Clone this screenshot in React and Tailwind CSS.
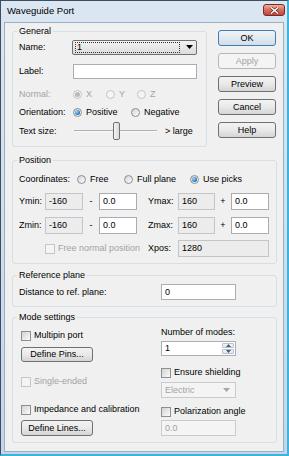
import React from 'react'

const dis = 'text-[#a3a3a3]'

function Radio({ checked, disabled, children, className = '' }) {
  return (
    <div className={`flex items-center ${className}`}>
      <span
        className={`w-[9px] h-[9px] rounded-full border flex items-center justify-center ${
          disabled ? 'border-[#c2c4c6] bg-[#f4f4f4]' : 'border-[#8c8e91] bg-linear-to-br from-[#d4d4d4] to-[#fcfcfc]'
        }`}
      >
        {checked && (
          <span
            className={`w-[5px] h-[5px] rounded-full ${
              disabled ? 'bg-[#b9b9b9]' : 'bg-[radial-gradient(circle_at_35%_35%,#9fdcff,#1767b8_75%)]'
            }`}
          />
        )}
      </span>
      <span className={`ml-[4px] whitespace-nowrap ${disabled ? dis : ''}`}>{children}</span>
    </div>
  )
}

function Check({ disabled, children, className = '' }) {
  return (
    <div className={`flex items-center ${className}`}>
      <span
        className={`shrink-0 w-[10px] h-[10px] border ${
          disabled ? 'border-[#c6c6c6] bg-[#f4f4f4]' : 'border-[#8e8f8f] bg-linear-to-br from-[#d2d2d2] to-[#fbfbfb]'
        }`}
      />
      <span className={`ml-[3px] whitespace-nowrap ${disabled ? dis : ''}`}>{children}</span>
    </div>
  )
}

function Button({ children, disabled, def, className = '' }) {
  return (
    <div
      className={`flex items-center justify-center rounded-[3px] border ${
        disabled
          ? 'border-[#b5b8bb] bg-[#f4f4f4] text-[#a3a3a3]'
          : def
          ? 'border-[#3c7fb1] bg-linear-to-b from-[#eef4fa] to-[#d3dde8]'
          : 'border-[#707070] bg-linear-to-b from-[#f3f3f3] via-[#e9e9e9] to-[#d5d5d5]'
      } ${className}`}
    >
      {children}
    </div>
  )
}

function Field({ value, disabled, grey, className = '' }) {
  return (
    <div
      className={`flex items-center px-[3px] border ${
        disabled
          ? 'border-[#c9cbce] bg-[#f4f4f4] text-[#a3a3a3]'
          : grey
          ? 'border-[#c2c5c9] bg-[#ececec]'
          : 'border-[#abadb3] bg-white'
      } ${className}`}
    >
      {value}
    </div>
  )
}

function Arrow({ color = '#000' }) {
  return (
    <svg width="7" height="4" viewBox="0 0 7 4">
      <path d="M0 0h7L3.5 4z" fill={color} />
    </svg>
  )
}

function Group({ title, className = '', children }) {
  return (
    <fieldset className={`border border-[#d5dfe5] rounded-[3px] ${className}`}>
      <legend className="ml-[4px] px-[2px] leading-[11px]">{title}</legend>
      {children}
    </fieldset>
  )
}

export default function App() {
  return (
    <div className="w-[289px] h-[456px] flex flex-col border-l border-t border-[#3e4e60] border-r-2 border-b-2 border-r-[#3ab6dc] border-b-[#3ab6dc] bg-linear-to-b from-[#dbe6f3] to-[#c5d6ea] font-['Liberation_Sans',Arial,sans-serif] text-[9px] leading-[11px] text-black">
      {/* title bar */}
      <div className="h-[21px] flex items-start justify-between">
        <span className="ml-[6px] mt-[4px] text-[9.5px]">Waveguide Port</span>
        <div className="mt-[3px] mr-[2px] w-[22px] h-[12px] rounded-[3px] border border-[#7a2a22] bg-linear-to-b from-[#eab0a2] via-[#d66a5c] to-[#c0463a] flex items-center justify-center">
          <svg width="9" height="7" viewBox="0 0 9 7">
            <path d="M1 0.5l7 6M8 0.5l-7 6" stroke="#5b1a14" strokeWidth="2.6" />
            <path d="M1 0.5l7 6M8 0.5l-7 6" stroke="#fff" strokeWidth="1.5" />
          </svg>
        </div>
      </div>

      {/* client area */}
      <div className="flex-1 mx-[3px] mb-[2px] bg-[#f0f0f0] border border-[#9aaec4] pl-[7px] pr-[6px] pt-[3px]">
        <div className="flex items-start">
          <Group title="General" className="w-[195px] pb-[6px]">
            <div className="pl-[6px] flex flex-col">
              <div className="mt-[2px] h-[16px] flex items-center">
                <span className="w-[53px]">Name:</span>
                <div className="w-[125px] h-[15px] rounded-[2px] border border-[#707070] bg-linear-to-b from-[#f3f3f3] to-[#dcdcdc] flex items-center pl-[2px] pr-[3px]">
                  <div className="flex-1 h-[11px] border border-dotted border-[#333] flex items-center pl-[1px]">1</div>
                  <div className="ml-[6px]">
                    <Arrow />
                  </div>
                </div>
              </div>
              <div className="mt-[8px] h-[16px] flex items-center">
                <span className="w-[54px]">Label:</span>
                <Field className="w-[124px] h-[15px]" value="" />
              </div>
              <div className="mt-[7px] h-[16px] flex items-center">
                <span className={`w-[54px] ${dis}`}>Normal:</span>
                <Radio checked disabled className="w-[33px]">X</Radio>
                <Radio disabled className="w-[31px]">Y</Radio>
                <Radio disabled>Z</Radio>
              </div>
              <div className="mt-[2px] h-[16px] flex items-center">
                <span className="w-[54px]">Orientation:</span>
                <Radio checked className="w-[58px]">Positive</Radio>
                <Radio>Negative</Radio>
              </div>
              <div className="mt-[2px] h-[18px] flex items-center">
                <span className="w-[55px]">Text size:</span>
                <div className="w-[83px] h-[18px] flex items-center">
                  <div className="flex-1 h-[2px] border-t border-[#b0b0b0] bg-[#f8f8f8]" />
                  <div className="w-[7px] h-[18px] rounded-[2px] border border-[#707070] bg-linear-to-r from-[#f4f4f4] to-[#d9d9d9]" />
                  <div className="w-[37px] h-[2px] border-t border-[#b0b0b0] bg-[#f8f8f8]" />
                </div>
                <span className="ml-[8px]">&gt; large</span>
              </div>
            </div>
          </Group>

          <div className="ml-[11px] mt-[4px] w-[58px] flex flex-col gap-[7px]">
            <Button def className="h-[16px]">OK</Button>
            <Button disabled className="h-[16px]">Apply</Button>
            <Button className="h-[16px]">Preview</Button>
            <Button className="h-[16px]">Cancel</Button>
            <Button className="h-[16px]">Help</Button>
          </div>
        </div>

        <Group title="Position" className="mt-[8px] pb-[6px]">
          <div className="pl-[6px] flex flex-col">
            <div className="mt-[5px] h-[16px] flex items-center">
              <span className="w-[58px]">Coordinates:</span>
              <Radio className="w-[47px]">Free</Radio>
              <Radio className="w-[66px]">Full plane</Radio>
              <Radio checked>Use picks</Radio>
            </div>
            {[
              ['Ymin:', 'Ymax:'],
              ['Zmin:', 'Zmax:'],
            ].map(([a, b], i) => (
              <div key={a} className={`h-[17px] flex items-center ${i === 0 ? 'mt-[6px]' : 'mt-[7px]'}`}>
                <span className="w-[26px]">{a}</span>
                <Field grey className="w-[38px] h-[17px]" value="-160" />
                <span className="w-[16px] text-center">-</span>
                <Field className="w-[38px] h-[17px]" value="0.0" />
                <span className="ml-[11px] w-[30px]">{b}</span>
                <Field grey className="w-[37px] h-[17px]" value="160" />
                <span className="w-[16px] text-center">+</span>
                <Field className="w-[38px] h-[17px]" value="0.0" />
              </div>
            ))}
            <div className="mt-[6px] h-[17px] flex items-center">
              <Check disabled className="ml-[26px] w-[103px]">Free normal position</Check>
              <span className="w-[30px]">Xpos:</span>
              <Field grey className="w-[91px] h-[17px]" value="1280" />
            </div>
          </div>
        </Group>

        <Group title="Reference plane" className="mt-[6px] pb-[6px]">
          <div className="pl-[6px] mt-[3px] h-[16px] flex items-center">
            <span className="w-[142px]">Distance to ref. plane:</span>
            <Field className="w-[75px] h-[16px]" value="0" />
          </div>
        </Group>

        <Group title="Mode settings" className="mt-[5px] pb-[6px]">
          <div className="pl-[8px] flex items-start">
            <div className="w-[140px] flex flex-col">
              <Check className="mt-[7px] h-[11px]">Multipin port</Check>
              <Button className="mt-[6px] w-[72px] h-[15px]">Define Pins...</Button>
              <Check disabled className="mt-[14px] h-[11px]">Single-ended</Check>
              <Check className="mt-[17px] h-[11px]">Impedance and calibration</Check>
              <Button className="mt-[5px] w-[72px] h-[16px]">Define Lines...</Button>
            </div>
            <div className="w-[75px] flex flex-col">
              <span className="mt-[4px] h-[11px] whitespace-nowrap">Number of modes:</span>
              <div className="mt-[3px] h-[15px] flex items-stretch border border-[#abadb3] bg-white">
                <span className="flex-1 flex items-center pl-[3px]">1</span>
                <div className="w-[14px] flex flex-col p-[1px] gap-[1px]">
                  <div className="flex-1 rounded-[1px] border border-[#b6c2d0] bg-linear-to-b from-[#f4f7fb] to-[#dfe6ee] flex items-center justify-center">
                    <svg width="5" height="3" viewBox="0 0 5 3"><path d="M0 3h5L2.5 0z" fill="#4a5c70" /></svg>
                  </div>
                  <div className="flex-1 rounded-[1px] border border-[#b6c2d0] bg-linear-to-b from-[#f4f7fb] to-[#dfe6ee] flex items-center justify-center">
                    <svg width="5" height="3" viewBox="0 0 5 3"><path d="M0 0h5L2.5 3z" fill="#4a5c70" /></svg>
                  </div>
                </div>
              </div>
              <Check className="mt-[11px] h-[11px]">Ensure shielding</Check>
              <div className="mt-[4px] h-[16px] flex items-center justify-between border border-[#c9cbce] bg-[#f4f4f4] pl-[3px] pr-[5px] text-[#a3a3a3]">
                <span>Electric</span>
                <Arrow color="#a8a8a8" />
              </div>
              <Check className="mt-[8px] h-[11px]">Polarization angle</Check>
              <Field disabled className="mt-[3px] h-[16px]" value="0.0" />
            </div>
          </div>
        </Group>
      </div>
    </div>
  )
}
